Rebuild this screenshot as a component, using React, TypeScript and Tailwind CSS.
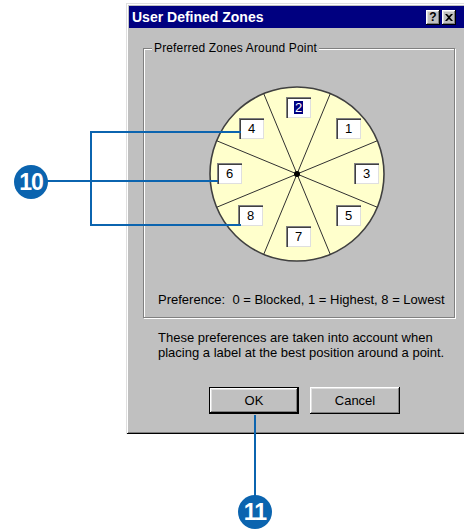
import React from "react";

interface Zone {
  n: string;
  pos: string;
  selected?: boolean;
}

const zones: Zone[] = [
  { n: "2", pos: "left-[78px] top-[12px]", selected: true },
  { n: "1", pos: "left-[128px] top-[33px]" },
  { n: "4", pos: "left-[31px] top-[33px]" },
  { n: "6", pos: "left-[9px] top-[78px]" },
  { n: "3", pos: "left-[146px] top-[78px]" },
  { n: "8", pos: "left-[30px] top-[120px]" },
  { n: "5", pos: "left-[128px] top-[120px]" },
  { n: "7", pos: "left-[78px] top-[141px]" },
];

const CaptionButton = ({ children }: { children: React.ReactNode }) => (
  <div className="flex h-[15px] w-[14px] items-center justify-center bg-[#c0c0c0] shadow-[inset_-1px_-1px_0_#000,inset_1px_1px_0_#fff,inset_-2px_-2px_0_#808080,inset_2px_2px_0_#dfdfdf]">
    {children}
  </div>
);

const Wheel = () => {
  const c = 89;
  const r = 87;
  const spokes = [0, 1, 2, 3, 4, 5, 6, 7].map((i) => {
    const a = ((22.5 + i * 45) * Math.PI) / 180;
    return { x: c + Math.sin(a) * r, y: c - Math.cos(a) * r };
  });

  return (
    <div className="relative ml-[64px] mt-[36px] h-[178px] w-[178px]">
      <svg width="178" height="178" viewBox="0 0 178 178" className="absolute inset-0">
        <circle cx={c} cy={c} r={r} fill="#ffffcc" stroke="#404040" strokeWidth="1.6" />
        {spokes.map((p, i) => (
          <line key={i} x1={c} y1={c} x2={p.x} y2={p.y} stroke="#303030" strokeWidth="1" />
        ))}
        <circle cx={c} cy={c} r="3" fill="#000" />
      </svg>
      {zones.map((z) => (
        <div
          key={z.n}
          className={`absolute ${z.pos} flex h-[21px] w-[25px] items-center justify-center bg-white text-[13px] leading-none shadow-[inset_1px_1px_0_#808080,inset_2px_2px_0_#404040,inset_-1px_-1px_0_#dfdfdf]`}
        >
          {z.selected ? (
            <span className="bg-[#000080] px-[1px] text-white">{z.n}</span>
          ) : (
            z.n
          )}
        </div>
      ))}
    </div>
  );
};

export default function App() {
  return (
    <div className="relative h-[530px] w-[464px] overflow-hidden bg-white font-['Liberation_Sans',Arial,sans-serif] text-black">
      {/* Dialog */}
      <div className="ml-[126px] mt-[3px] h-[431px] w-[345px] bg-[#c0c0c0] p-[3px] shadow-[inset_1px_1px_0_#dfdfdf,inset_-1px_-1px_0_#000,inset_2px_2px_0_#fff,inset_-2px_-2px_0_#808080]">
        {/* Title bar */}
        <div className="flex h-[22px] items-center bg-[#000080] pl-[3px] pr-[12px]">
          <span className="text-[14px] font-bold text-white">User Defined Zones</span>
          <div className="ml-auto flex gap-[2px]">
            <CaptionButton>
              <span className="text-[12px] font-bold leading-none">?</span>
            </CaptionButton>
            <CaptionButton>
              <svg width="8" height="7" viewBox="0 0 8 7">
                <path d="M0 0h2l2 2 2-2h2L5 3.5 8 7H6L4 5 2 7H0l3-3.5z" fill="#000" />
              </svg>
            </CaptionButton>
          </div>
        </div>

        {/* Group box */}
        <div className="relative ml-[14px] mt-[20px] h-[270px] w-[312px] border border-[#808080] shadow-[1px_1px_0_#fff,inset_1px_1px_0_#fff]">
          <span className="absolute -top-[8px] left-[8px] bg-[#c0c0c0] px-[2px] text-[12px] leading-[15px] tracking-[0.15px]">
            Preferred Zones Around Point
          </span>
          <Wheel />
          <p className="mt-[29px] pl-[14px] text-[13px] leading-[15px]">
            Preference:&nbsp; 0 = Blocked, 1 = Highest, 8 = Lowest
          </p>
        </div>

        <p className="ml-[29px] mt-[12px] text-[13px] leading-[15px]">
          These preferences are taken into account when
          <br />
          placing a label at the best position around a point.
        </p>

        {/* Buttons */}
        <div className="ml-[80px] mt-[27px] flex gap-[11px]">
          <div className="h-[27px] w-[90px] border border-black">
            <div className="flex h-full w-full items-center justify-center text-[13px] shadow-[inset_-1px_-1px_0_#000,inset_1px_1px_0_#fff,inset_-2px_-2px_0_#808080,inset_2px_2px_0_#dfdfdf]">
              OK
            </div>
          </div>
          <div className="flex h-[27px] w-[90px] items-center justify-center text-[13px] shadow-[inset_-1px_-1px_0_#000,inset_1px_1px_0_#fff,inset_-2px_-2px_0_#808080,inset_2px_2px_0_#dfdfdf]">
            Cancel
          </div>
        </div>
      </div>

      {/* Callouts */}
      <svg className="pointer-events-none absolute inset-0" width="464" height="530">
        <g stroke="#0b64af" strokeWidth="2" fill="none">
          <path d="M91 131V226" />
          <path d="M90 132H241" />
          <path d="M40 181H218" />
          <path d="M90 225H241" />
          <path d="M255 415V500" />
        </g>
      </svg>
      <div className="absolute left-[14px] top-[165px] flex h-[34px] w-[34px] items-center justify-center rounded-full bg-[#0b64af] text-[23px] font-bold tracking-[-1px] text-white">
        10
      </div>
      <div className="absolute left-[238px] top-[495px] flex h-[34px] w-[34px] items-center justify-center rounded-full bg-[#0b64af] text-[23px] font-bold tracking-[-1px] text-white">
        11
      </div>
    </div>
  );
}
